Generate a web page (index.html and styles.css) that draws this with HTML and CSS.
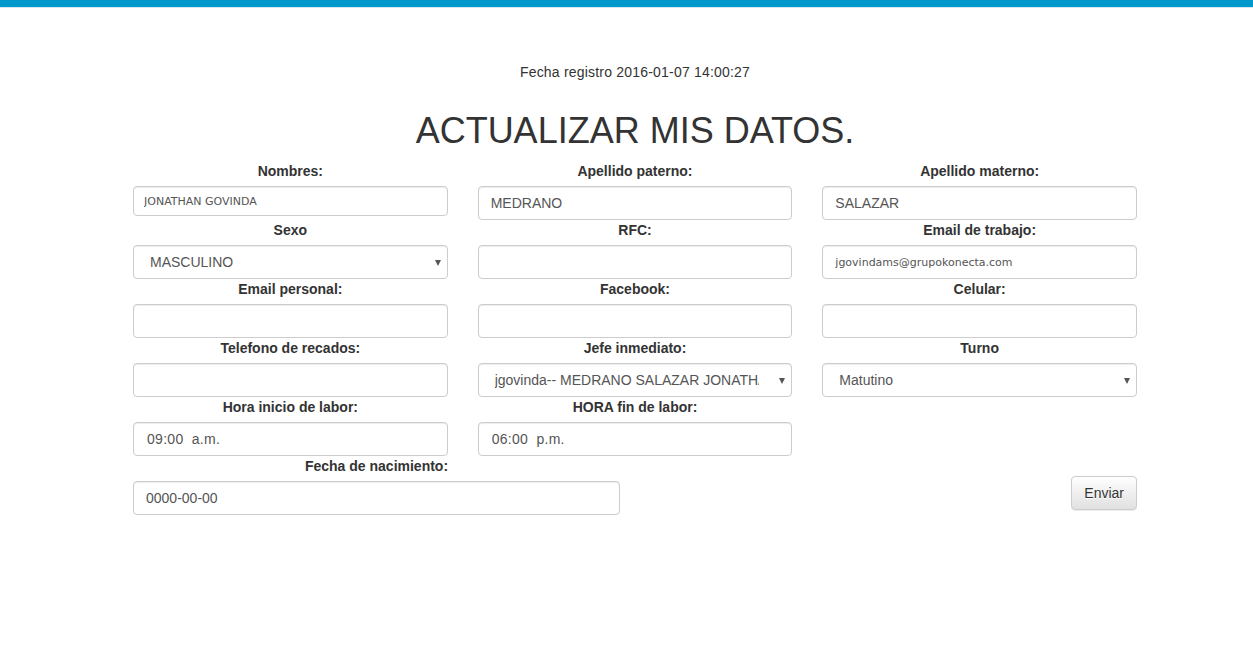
FILE: index.html
```html
<!DOCTYPE html>
<html lang="es">
<head>
<meta charset="utf-8">
<title>Actualizar mis datos</title>
<link rel="stylesheet" href="styles.css">
</head>
<body>
<div class="topbar"></div>
<main class="page">
  <p class="registro">Fecha registro 2016-01-07 14:00:27</p>
  <h1 class="title">ACTUALIZAR MIS DATOS.</h1>
  <form class="form">
    <div class="grid3">
      <div class="field">
        <label>Nombres:</label>
        <input class="control control-sm small-font" type="text" value="JONATHAN GOVINDA">
      </div>
      <div class="field">
        <label>Apellido paterno:</label>
        <input class="control" type="text" value="MEDRANO">
      </div>
      <div class="field">
        <label>Apellido materno:</label>
        <input class="control" type="text" value="SALAZAR">
      </div>

      <div class="field">
        <label>Sexo</label>
        <div class="select-wrap">
          <select class="control select"><option>MASCULINO</option></select>
        </div>
      </div>
      <div class="field">
        <label>RFC:</label>
        <input class="control" type="text" value="">
      </div>
      <div class="field">
        <label>Email de trabajo:</label>
        <input class="control small-font" type="text" value="jgovindams@grupokonecta.com">
      </div>

      <div class="field">
        <label>Email personal:</label>
        <input class="control" type="text" value="">
      </div>
      <div class="field">
        <label>Facebook:</label>
        <input class="control" type="text" value="">
      </div>
      <div class="field">
        <label>Celular:</label>
        <input class="control" type="text" value="">
      </div>

      <div class="field">
        <label>Telefono de recados:</label>
        <input class="control" type="text" value="">
      </div>
      <div class="field">
        <label>Jefe inmediato:</label>
        <div class="select-wrap">
          <select class="control select"><option>jgovinda-- MEDRANO SALAZAR JONATHAN GOVINDA</option></select>
        </div>
      </div>
      <div class="field">
        <label>Turno</label>
        <div class="select-wrap">
          <select class="control select"><option>Matutino</option></select>
        </div>
      </div>

      <div class="field">
        <label>Hora inicio de labor:</label>
        <input class="control time" type="text" value="09:00 a.m.">
      </div>
      <div class="field">
        <label>HORA fin de labor:</label>
        <input class="control time" type="text" value="06:00 p.m.">
      </div>
      <div class="field"></div>
    </div>

    <div class="grid2">
      <div class="field">
        <label>Fecha de nacimiento:</label>
        <input class="control" type="text" value="0000-00-00">
      </div>
      <div class="actions">
        <button type="button" class="btn">Enviar</button>
      </div>
    </div>
  </form>
</main>
</body>
</html>
```

FILE: styles.css
```css
* { box-sizing: border-box; }

body {
  margin: 0;
  font-family: "Liberation Sans", Arial, sans-serif;
  font-size: 14px;
  line-height: 20px;
  color: #333;
  background: #fff;
}

.topbar {
  height: 8px;
  background: #0099cc;
  border-bottom: 1px solid #d6e9f1;
}

.page {
  width: 1004px;
  margin-left: 133px;
}

.registro {
  margin: 54px 0 0;
  text-align: center;
  font-size: 14px;
  line-height: 20px;
  color: #333;
  letter-spacing: 0.2px;
}

.title {
  margin: 29px 0 10px;
  text-align: center;
  font-size: 36px;
  line-height: 40px;
  font-weight: 400;
  color: #333;
}

.form { margin: 0; }

.grid3 {
  display: grid;
  grid-template-columns: repeat(3, 1fr);
  column-gap: 30px;
  align-items: start;
}

.grid2 {
  display: grid;
  grid-template-columns: 1fr 1fr;
  column-gap: 30px;
  align-items: start;
}

.field label {
  display: block;
  text-align: center;
  font-weight: 700;
  font-size: 14px;
  line-height: 20px;
  margin-bottom: 5px;
  color: #333;
}

.control {
  display: block;
  width: 100%;
  height: 34px;
  padding: 6px 12px;
  font-family: "Liberation Sans", Arial, sans-serif;
  font-size: 14px;
  line-height: 20px;
  color: #555;
  background: #fff;
  border: 1px solid #ccc;
  border-radius: 4px;
  box-shadow: inset 0 1px 1px rgba(0, 0, 0, 0.075);
  outline: none;
}

.control-sm {
  height: 30px;
  padding: 5px 10px;
}

.small-font {
  font-family: "DejaVu Sans", Verdana, sans-serif;
  font-size: 11px;
}

.time {
  padding-left: 13px;
  word-spacing: 4px;
  letter-spacing: 0.3px;
}

.select-wrap { position: relative; }

.select {
  appearance: none;
  -webkit-appearance: none;
  padding-left: 16px;
  padding-right: 32px;
  white-space: nowrap;
  overflow: hidden;
  text-overflow: clip;
}

.select-wrap::after {
  content: "";
  position: absolute;
  right: 7px;
  top: 15px;
  border-left: 3.5px solid transparent;
  border-right: 3.5px solid transparent;
  border-top: 6px solid #555;
  pointer-events: none;
}

.actions {
  display: flex;
  justify-content: flex-end;
  padding-top: 20px;
}

.btn {
  height: 34px;
  padding: 6px 12px;
  font-family: "Liberation Sans", Arial, sans-serif;
  font-size: 14px;
  line-height: 20px;
  color: #333;
  background: linear-gradient(to bottom, #fff 0%, #e0e0e0 100%);
  border: 1px solid #ccc;
  border-radius: 4px;
  box-shadow: inset 0 1px 0 rgba(255, 255, 255, 0.15), 0 1px 1px rgba(0, 0, 0, 0.075);
  text-shadow: 0 1px 0 #fff;
}
```
